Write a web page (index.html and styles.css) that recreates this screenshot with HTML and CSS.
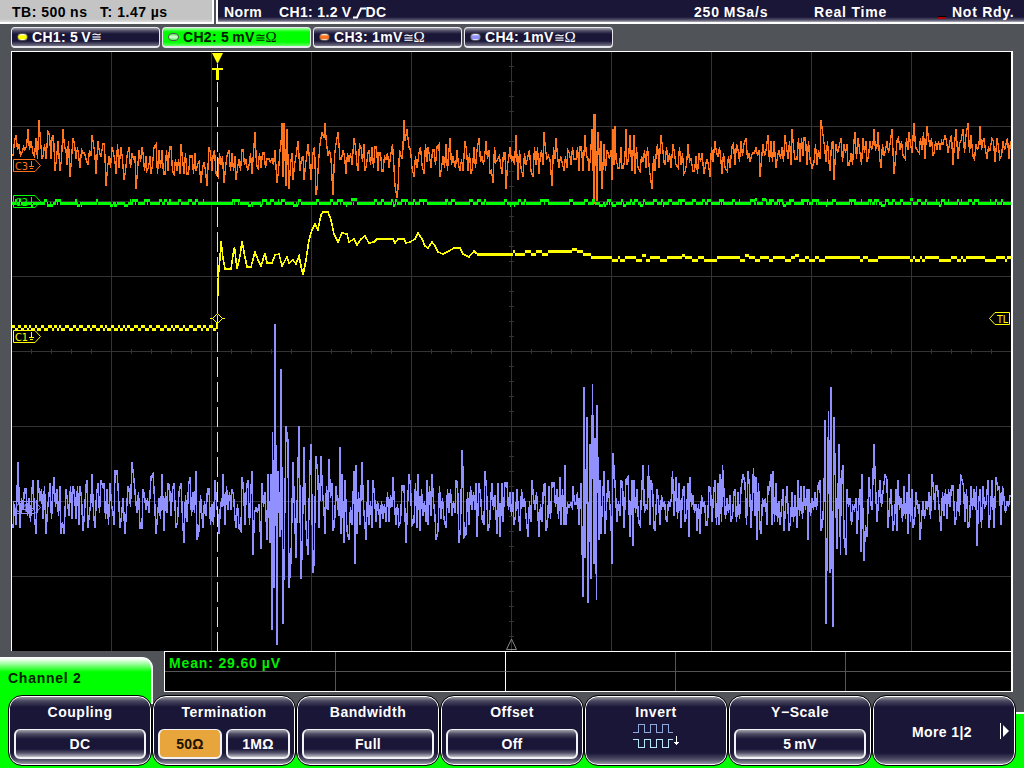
FILE: index.html
```
<!DOCTYPE html>
<html lang="en">
<head>
<meta charset="utf-8">
<title>Oscilloscope</title>
<link rel="stylesheet" href="styles.css">
</head>
<body>
<div class="scope">
  <header class="status">
    <div class="timebase"><span class="tb">TB: 500<i class="thin"></i>ns</span><span class="tpos">T: 1.47<i class="thin"></i>µs</span></div>
    <div class="acq">
      <span class="mode">Norm</span>
      <span class="trig">CH1: 1.2<i class="thin"></i>V<svg class="edge" width="13" height="12" viewBox="0 0 13 12"><path d="M0 10.5H4L8 1.500H13" /></svg>DC</span>
      <span class="rate">250<i class="thin"></i>MSa/s</span>
      <span class="sampling">Real Time</span>
      <span class="ready">Not Rdy.</span>
    </div>
  </header>
  <nav class="channels">
    <div class="chan c1"><i class="led"></i><span>CH1: 5<i class="thin"></i>V</span><span class="sym">≅</span></div>
    <div class="chan c2 active"><i class="led"></i><span>CH2: 5<i class="thin"></i>mV</span><span class="sym">≅<b>Ω</b></span></div>
    <div class="chan c3"><i class="led"></i><span>CH3: 1mV</span><span class="sym">≅<b>Ω</b></span></div>
    <div class="chan c4"><i class="led"></i><span>CH4: 1mV</span><span class="sym">≅<b>Ω</b></span></div>
  </nav>
  <main class="graph"><svg id="plot" width="999" height="599" viewBox="12 52 999 599"></svg></main>
  <section class="results">
    <div class="tab">Channel 2</div>
    <div class="measure">
      <div class="cell mean">Mean: 29.60<i class="thin"></i>µV</div><div class="cell major"></div><div class="cell"></div><div class="cell"></div><div class="cell"></div>
      <div class="cell low"></div><div class="cell low major"></div><div class="cell low"></div><div class="cell low"></div><div class="cell low"></div>
    </div>
  </section>
  <footer class="softkeys">
    <div class="key"><h2>Coupling</h2><div class="vals"><span class="val">DC</span></div></div>
    <div class="key"><h2>Termination</h2><div class="vals two"><span class="val on">50Ω</span><span class="val">1MΩ</span></div></div>
    <div class="key"><h2>Bandwidth</h2><div class="vals"><span class="val">Full</span></div></div>
    <div class="key"><h2>Offset</h2><div class="vals"><span class="val">Off</span></div></div>
    <div class="key"><h2>Invert</h2>
      <svg class="pulse" width="48" height="26" viewBox="0 0 48 26" shape-rendering="crispEdges">
        <path stroke="#8fa9dc" d="M0 9.500H5.500V1.500H11.500V9.500H17.500V1.500H23.500V9.500H29.500V1.500H35.500V9.500H40"/>
        <path stroke="#b9e6f8" d="M0 16.500H5.500V24.500H11.500V16.500H17.500V24.500H23.500V16.500H29.500V24.500H35.500V16.500H40"/>
        <path stroke="#fff" d="M43.500 13V22M41 19.500H46M42 20.500H45"/>
      </svg></div>
    <div class="key"><h2>Y&minus;Scale</h2><div class="vals"><span class="val">5<i class="thin"></i>mV</span></div></div>
    <div class="key more"><span>More 1|2</span><svg class="arrow" width="9" height="16" viewBox="0 0 9 16"><path d="M.5 0V16" stroke="#fff"/><path d="M3 2L9 8L3 14Z" fill="#fff"/></svg></div>
  </footer>
</div>
<script src="plot.js"></script>
</body>
</html>
```
FILE: styles.css
```
* { box-sizing: border-box; }
body { margin: 0; background: #505458; }
.scope {
  width: 1024px; height: 768px; overflow: hidden; display: flex; flex-direction: column;
  background: #505458; color: #fff;
  font: bold 14px/16px "Liberation Sans", Arial, sans-serif; letter-spacing: .7px; white-space: nowrap;
}
.thin { display: inline-block; width: 4px; }
.status { display: flex; height: 24px; gap: 2px; }
.timebase {
  width: 214px; height: 24px; padding: 4px 0 0 12px; display: flex; color: #000;
  background: linear-gradient(#c4c4c4 19px, #ddd 22px); border-right: 2px solid #fff; border-bottom: 2px solid #fff;
}
.tb { width: 88px; letter-spacing: .5px; }
.tpos { letter-spacing: .55px; }
.acq {
  flex: 1; height: 24px; padding: 4px 0 0 6px; display: flex;
  background: linear-gradient(#1a1638 17px, #55536b 20px, #b0afbb 22px);
  border-left: 2px solid #fff; border-bottom: 2px solid #fff;
}
.mode { width: 55px; letter-spacing: .4px; }
.trig { width: 415px; letter-spacing: .35px; }
.rate { width: 120px; letter-spacing: .8px; }
.sampling { width: 138px; letter-spacing: .8px; }
.ready { position: relative; letter-spacing: .75px; }
.ready::before { content: ""; position: absolute; left: -14px; top: 12px; width: 8px; height: 2px; background: #b00000; border-top: 1px solid #000; }
.edge { fill: none; stroke: #fff; stroke-width: 2; vertical-align: -2px; margin-left: 1px; }
.channels { height: 27px; padding: 3px 0 0 11px; display: flex; gap: 2px; flex: none; }
.channels .thin { width: 3px; }
.chan {
  width: 149px; height: 21px; padding-left: 5px; display: flex; align-items: center; letter-spacing: .3px;
  border: 1px solid #e8e8ee; border-bottom-width: 2px; border-radius: 4px;
  background: linear-gradient(#a09fae 0, #4b4960 3px, #1a1638 6px, #1a1638 13px, #777589 18px);
}
.chan.active { background: linear-gradient(#a6ffa6 0, #0f0 4px, #0f0 14px, #6f6 18px); color: #001c00; }
.led { width: 11px; height: 8px; margin-right: 4px; border-radius: 4px; border: 1px solid #555; background: linear-gradient(#fff, var(--ink) 35%, var(--ink) 75%, #fff); }
.c1 { --ink: #ff0; }
.c2 { --ink: #4ee84e; }
.c3 { --ink: #ff741c; }
.c4 { --ink: #9190ff; }
.c2 .led { background: linear-gradient(#4ee84e, #e0ffe0 50%, #4ee84e); }
.sym { font: 13px/16px "DejaVu Serif", serif; letter-spacing: -1px; }
.sym b { font: 15px/16px "Liberation Serif", serif; margin-left: 1px; }
.graph { width: 1002px; height: 600px; margin-left: 11px; flex: none; background: #000; border: 1px solid #fff; border-right-width: 2px; border-bottom: 0; }
.graph svg { display: block; }
.results { display: flex; height: 41px; flex: none; gap: 11px; }
.tab {
  width: 153px; height: 35px; margin-top: 6px; padding: 12px 0 0 8px; color: #002200; letter-spacing: .75px;
  border-right: 2px solid #fff; border-top: 1px solid #fff; border-top-right-radius: 11px;
  background: linear-gradient(#f3fff3 1px, #b0ffb0 5px, #0f0 14px);
}
.measure { width: 849px; height: 41px; border: 1px solid #fff; border-right-width: 2px; background: #000; display: grid; grid-template-columns: 171px 170px 170px 170px 1fr; grid-template-rows: 20px 19px; }
.cell { border-right: 1px solid #555; border-bottom: 1px solid #555; }
.cell.major { border-right-color: #fff; }
.cell:nth-child(5n) { border-right: 0; }
.low { border-bottom: 0; }
.mean { color: #00f000; padding: 3px 0 0 4px; letter-spacing: .85px; }
.softkeys {
  height: 76px; padding: 3px 0 0 8px; display: flex; flex: none;
  background:
    linear-gradient(#0f0, #0f0) 0 63px / 100% 13px no-repeat,
    linear-gradient(#fff 2px, #0f0 2px) right 20px / 12px 100% no-repeat,
    linear-gradient(#fff, #fff) 151px 0 / 2px 12px no-repeat,
    linear-gradient(#0f0, #0f0) 0 0 / 151px 100% no-repeat;
}
.key {
  position: relative; width: 144px; height: 71px; padding: 8px 4px 0; text-align: center;
  border: 1px solid #000; border-radius: 14px; box-shadow: inset 0 0 0 1px #fff;
  background: linear-gradient(#96959f 1px, #4a4860 5px, #1a1638 11px, #1a1638 57px, #55536b 64px, #aaa9b4 69px);
}
.key h2 { margin: 0; font-size: 14px; line-height: 16px; font-weight: bold; height: 25px; letter-spacing: .55px; }
.vals { display: flex; gap: 2px; padding: 0; }
.vals .thin { width: 3px; }
.val {
  flex: 1; height: 30px; margin: 0 1px; line-height: 28px; font-size: 14px; letter-spacing: .3px;
  border: 2px solid #f2f2f5; border-top-width: 1px; border-bottom-width: 2px; border-radius: 6px;
  background: linear-gradient(#a5a4af 0, #4c4a61 4px, #1a1638 9px, #1a1638 19px, #55536b 23px, #c0bfc8 27px);
}
.val.on { background: #e8a53c; color: #1b1200; }
.pulse { display: block; margin: -6px auto 0 44px; fill: none; }
.more { padding: 28px 4px 0 0; letter-spacing: .4px; }
.arrow { position: absolute; right: 6px; top: 27px; }
#plot text { font: 11px "DejaVu Sans", sans-serif; letter-spacing: 0; }
```
FILE: plot.js
```
const svg = document.getElementById('plot');
const NS = 'http://www.w3.org/2000/svg';

function add(tag, attrs, text) {
  const el = document.createElementNS(NS, tag);
  for (const k in attrs) el.setAttribute(k, attrs[k]);
  if (text) el.textContent = text;
  svg.appendChild(el);
  return el;
}
function line(d, stroke, width, extra) {
  add('path', Object.assign({ d, stroke, 'stroke-width': width, fill: 'none', 'shape-rendering': 'crispEdges' }, extra));
}
let seed = 7;
function rnd() { seed = (seed * 16807) % 2147483647; return seed / 2147483647; }
function lerp(pts, x) {
  for (let i = 2; i < pts.length; i += 2)
    if (x <= pts[i]) return pts[i - 1] + (pts[i + 1] - pts[i - 1]) * (x - pts[i - 2]) / (pts[i] - pts[i - 2]);
  return pts[pts.length - 1];
}

// Graticule: ten by eight divisions with minor ticks on the centre axes
let g = '';
for (let x = 111; x < 1000; x += 100) g += `M${x}.5 52V651`;
for (let y = 126; y < 640; y += 75) g += `M12 ${y}.5H1011`;
for (let x = 31; x < 1010; x += 20) g += `M${x}.5 349V354`;
for (let y = 66; y < 650; y += 15) g += `M509 ${y}.5H514`;
line(g, '#333', 1);

// Peaks of each noisy trace as x,y pairs; samples between them are noise round the centre curve
function noisy(peaks, centre, amp, color, width) {
  const pts = [];
  let last = 12, side = 1;
  const fill = to => {
    for (let x = last + 1.500; x < to - 0.7; x += 1.500) {
      side = -side;
      pts.push([x, lerp(centre, x) + side * rnd() * amp]);
    }
  };
  for (let i = 0; i < peaks.length; i += 2) {
    fill(peaks[i]);
    pts.push([peaks[i], peaks[i + 1]]);
    last = peaks[i];
  }
  fill(1012);
  line('M' + pts.map(p => p[0].toFixed(1) + ' ' + (Math.round(p[1] / 3) * 3)).join('L'), color, width);
}

const ch4 = [13,529,18,463,20,528,26,489,33,481,36,535,38,481,40,500,46,535,50,484,54,478,61,535,64,535,66,489,73,487,80,487,83,531,87,481,88,528,92,475,95,529,98,484,101,481,104,484,110,484,114,526,115,472,117,472,120,529,125,535,129,490,132,463,134,481,142,529,143,490,151,478,153,475,156,535,162,474,164,532,168,484,174,484,176,529,181,484,184,543,190,478,196,472,197,541,199,532,203,529,209,490,215,481,219,535,223,475,225,526,232,490,236,529,241,531,242,478,248,481,252,472,253,556,261,549,262,484,267,540,268,475,270,544,271,475,272,631,272.5,433,274,589,275,325,277,645,278,472,280,537,281,370,283,624,284,568,286,427,288,442,289,588,291,562,293,463,296,558,299,427,301,579,302,556,304,448,307,543,308,555,310,466,311,445,313,574,314,565,316,457,318,478,319,529,321,457,325,534,329,460,332,484,333,531,336,486,340,448,341,534,342,475,344,543,345,481,347,531,349,541,354,472,355,564,356,466,357,534,362,463,366,540,368,481,369,525,373,481,380,528,393,478,399,525,404,487,406,543,409,475,414,522,418,475,420,531,427,481,428,525,432,475,436,540,438,531,446,528,456,481,459,543,462,451,463,472,464,537,466,534,476,484,477,537,479,484,484,525,485,472,488,531,492,484,497,534,498,484,500,537,502,484,503,522,505,484,507,484,514,525,520,531,528,537,532,481,539,537,545,484,546,531,554,484,560,478,561,525,565,466,566,525,573,487,581,484,583,597,584,388,585,559,587,418,588,603,590,445,591,579,592.5,385,594,564,595,439,596.5,600,597,406,599,540,600,481,601,534,604,472,605,535,608,481,612,564,613,454,615,484,617,522,621,481,624,528,626,481,628,478,630,537,632,481,633,546,634,481,640,525,643,466,648.5,466,650,526,651,481,655,531,657,490,667,522,672.5,472,674,516,676,478,679,484,681,528,684,487,685,522,689,537,690,478,697,531,700,534,706,525,709,487,715,481,719,525,720,475,722.5,466,731,522,735,490,743,475,745,484,748,472,753.5,469,756,478,757,540,761,534,768,487,771,475,772,525,773,472,780,525,784,531,789,531,797,528,798,481,808,540,809,489,820,481,821,531,825,421,826,624,828.5,412,830,573,831,388,832,550,833,627,834,418,837,550,839,445,840.5,555,841,481,843,466,844,537,846,555,847,490,857,534,861,552,862,475,864,561,867,537,869,478,874,445,880,481,885,475,887,481,888,528,893,531,897,531,898,481,908,534,909,475,913,528,920,540,932,475,936,487,941,531,953,487,955,525,960.5,475,962,481,968,528,976.5,487,977,546,980,490,988,481,989,528,992,481,994,528,996,478,998,490,1004,499];
const ch3 = [13,155,16,136,22,153,28,130,33,154,39,121,43,156,48,133,52,137,55,171,60,172,63,130,67,166,70,178,73,139,80,168,88,165,92,136,96,174,98,142,103,143,106,187,112,146,116,175,121,147,124,181,129,148,136,190,143,152,147,171,151,174,156,145,165,174,171,147,174,175,181,145,187,175,192,156,196,172,201,184,207,187,209,148,213,155,218,177,224,183,229,149,236,181,243,150,249,166,255,133,258,169,264,152,269,160,277,183,281,145,282,124,283,178,284,124,286,185,287,130,289,189,293,179,298,142,300,172,304,180,308,145,311,180,313,154,316,195,317,190,320,145,322,132,324,139,325,124,326,139,328,157,331,160,333,196,338,133,340,160,346,174,354,137,358,171,361,146,365,171,369,149,375,146,379,153,383,171,391,154,395,187,397,198,398,189,401,155,404,121,405,142,407,130,409,148,414,178,419,152,424,174,428,148,434,150,439,145,440,178,450,139,454,163,460,171,465,142,471,174,479,139,486,142,490,174,493,184,498,160,502,174,505,152,506,189,510,148,516,136,518,180,523,177,528,157,533,177,540,158,544,133,552,186,556,139,564,171,568,149,576,158,580,148,585,136,589,171,592,130,592.7,170,593.4,115,594,205,595,115,597,200,598,133,600,171,601,142,602,189,604,144,608,153,612,180,613,130,614,166,615,127,616,160,618,168,622,169,626,130,627,165,630,136,632,171,634,136,635,174,640,171,650,175,652,190,656,156,661,136,665,165,673,145,678,167,684,174,688,145,693,171,704,174,710,176,715,142,722,174,727,171,732,146,738,151,746,139,750,163,760,178,768,136,776,168,785,136,792,130,797,159,804,139,812,168,814,163,821,121,823,136,830,171,833,142,834,180,836,145,841,137,848,166,855,133,860,154,867,163,874,130,878,133,881,169,887,142,892,130,894,174,897,140,905,159,909,133,914,124,919,153,927,127,934,153,945,136,950,142,953,166,958,158,963,130,968,124,973,156,980,127,984,139,987,159,992,139,997,139,1000,159,1006,144];
noisy(ch4, [12,504,180,507,300,506,420,506,600,505,1010,506], 22, '#9190ff', 1.5);
noisy(ch3, [12,149,60,149,120,158,200,164,260,161,330,155,400,157,520,160,600,156,650,157,690,161,740,153,850,152,960,143,1010,150], 14, '#ff741c', 1.35);

// Channel 2: flat baseline, one-step quantisation noise in three-pixel blocks
let d = '';
for (let x = 12; x < 1011;) {
  const r = rnd();
  const w = 1 + Math.floor(rnd() * 4);
  const y = r < 0.05 ? 205.500 : r < 0.065 ? 199.500 : r < 0.4 ? 200.500 : 203.500;
  d += `M${x} ${y}h${w}`;
  if (y !== 203.500) d += `M${x} 203.500h1`;
  x += w;
}
line(d, '#0f0', 3);

// Channel 1: step with ringing, then a settled level
d = '';
for (let x = 12, k = 0; x < 217; k++) {
  const w = Math.min(2 + Math.floor(rnd() * 3), 217 - x);
  d += `M${x} ${k % 2 ? 329.500 : 326.500}h${w}`;
  x += w;
}
line(d, '#ff0', 3);
const step = [217,329,218,283,219,268,220,258,221,241,223,258,225,269,231,269,233,255,234.5,247,237,269,240,256,242,241,244,252,247,267,251,267,255,252,258,260,261,266,265,253,267,263,272,263,275,255,279,254,282,266,287,257,289,263,293,260,296,264,299,256,301,266,303,275,306,260,309,240,312,230,315,224,318,230,321,215,323,212,328,212,331,220,334,234,338,242,342,233,347,234,349,242,354,239,357,245,361,239,365,236,369,243,374,242,377,239,393,239,395,243,398,239,404,239,406,243,410,242,415,239,418,233,422,239,425,246,428,248,432,242,435,246,438,252,443,254,449,251,454,248,460,248,463,254,469,257,474,251,477,254];
d = 'M';
for (let i = 0; i < step.length; i += 2) d += (i ? 'L' : '') + step[i] + ' ' + step[i + 1];
line(d, '#ff0', 1.600);
d = '';
for (let x = 477; x < 1011;) {
  const base = x < 503 ? 254.500 : x < 578 ? 251.500 : x < 595 ? 254.500 : 257.500;
  const r = rnd();
  const w = Math.min(2 + Math.floor(rnd() * 5), 1011 - x);
  d += `M${x} ${base + (r < .38 ? 3 : r < .42 ? -2 : 0)}h${w}`;
  x += w;
}
line(d, '#ff0', 3);

// Trigger marker, dashed position line and level diamond
line('M217.500 82V651', '#ff0', 1, { 'stroke-dasharray': '20 5' });
line('M217.500 283V329M210 318.500H213M222 318.500H225', '#ff0', 1);
add('path', { d: 'M212 53H223L217.500 64Z', fill: '#ff0' });
line('M212 69H223', '#ff0', 2);
line('M217.500 64V80', '#ff0', 1);
line('M217.500 69V80', '#ff0', 3);
add('path', { d: 'M212.500 318.500L217.500 313.500L222.500 318.500L217.500 323.500Z', fill: '#000', stroke: '#ff0' });
line('M217.500 315V323', '#ff0', 1);
add('path', { d: 'M506.500 649.500H516.500L511.500 639Z', fill: 'none', stroke: '#888' });

// Ground-reference tags on the left edge
[['C3', 165, '#ff741c'], ['C2', 201, '#0f0'], ['C1', 336, '#ff0'], ['C4', 507, '#9190ff']].forEach(([name, y, c]) => {
  add('path', { d: `M13.500 ${y - 5.500}H35L40.500 ${y + .5}L35 ${y + 6.500}H13.500Z`, fill: 'none', stroke: c });
  add('text', { x: 15, y: y + 4.500, fill: c, textLength: 13, lengthAdjust: 'spacingAndGlyphs' }, name);
  line(`M31.500 ${y - 4}V${y + 1}M29 ${y + 1.500}H34M30 ${y + 3.500}H33`, c, 1);
});
add('path', { d: 'M1009.500 312.500H995L989.500 318.500L995 324.500H1009.500Z', fill: 'none', stroke: '#ff0' });
add('text', { x: 997, y: 322.500, fill: '#ff0', textLength: 11, lengthAdjust: 'spacingAndGlyphs' }, 'TL');
```
